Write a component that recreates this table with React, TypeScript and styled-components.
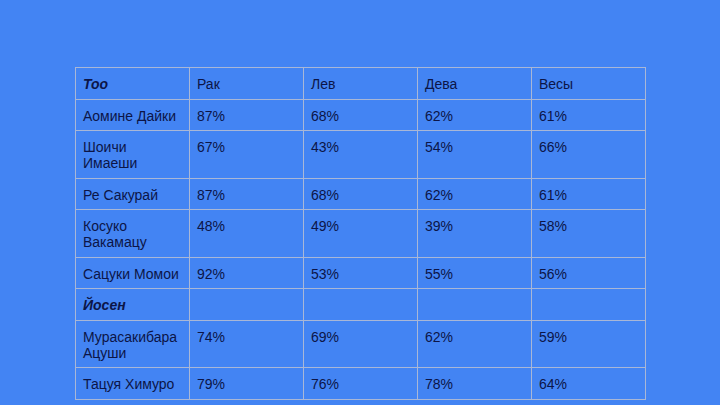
import React from "react";
import styled, { createGlobalStyle } from "styled-components";

const GlobalStyle = createGlobalStyle`
  html, body {
    margin: 0;
    padding: 0;
    background: #4384f3;
  }
`;

const Page = styled.div`
  width: 720px;
  height: 405px;
  box-sizing: border-box;
  padding: 67px 0 0 75px;
  background: #4384f3;
  overflow: hidden;
  font-family: "Liberation Sans", Arial, sans-serif;
`;

const Table = styled.table`
  width: 571px;
  border-collapse: collapse;
  table-layout: fixed;
  color: #0c1547;
  font-size: 14px;
  line-height: 16px;
`;

const Cell = styled.td<{ $strong?: boolean }>`
  border: 1px solid #a9b7d6;
  padding: 8px 6px 6.5px 7px;
  vertical-align: top;
  text-align: left;
  font-weight: ${(p) => (p.$strong ? 700 : 400)};
  font-style: ${(p) => (p.$strong ? "italic" : "normal")};
`;

type Row = { name: string; vals: string[]; group?: boolean };

const head = ["Рак", "Лев", "Дева", "Весы"];

const rows: Row[] = [
  { name: "Аомине Дайки", vals: ["87%", "68%", "62%", "61%"] },
  { name: "Шоичи Имаеши", vals: ["67%", "43%", "54%", "66%"] },
  { name: "Ре Сакурай", vals: ["87%", "68%", "62%", "61%"] },
  { name: "Косуко Вакамацу", vals: ["48%", "49%", "39%", "58%"] },
  { name: "Сацуки Момои", vals: ["92%", "53%", "55%", "56%"] },
  { name: "Йосен", vals: ["", "", "", ""], group: true },
  { name: "Мурасакибара Ацуши", vals: ["74%", "69%", "62%", "59%"] },
  { name: "Тацуя Химуро", vals: ["79%", "76%", "78%", "64%"] },
];

export default function App() {
  return (
    <Page>
      <GlobalStyle />
      <Table>
        <tbody>
          <tr>
            <Cell $strong>Тоо</Cell>
            {head.map((h) => (
              <Cell key={h}>{h}</Cell>
            ))}
          </tr>
          {rows.map((r) => (
            <tr key={r.name}>
              <Cell $strong={r.group}>{r.name}</Cell>
              {r.vals.map((v, i) => (
                <Cell key={i}>{v}</Cell>
              ))}
            </tr>
          ))}
        </tbody>
      </Table>
    </Page>
  );
}
